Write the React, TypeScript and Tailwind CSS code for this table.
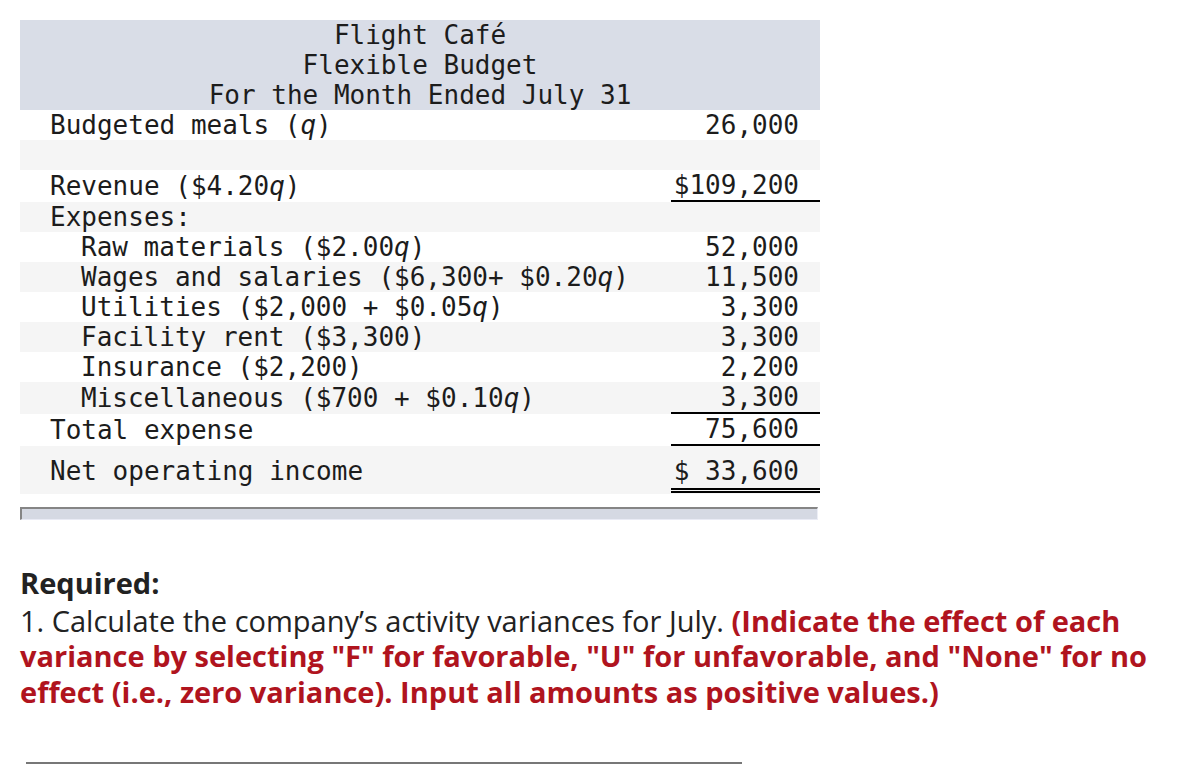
import React from "react";

type Row = {
  label: React.ReactNode;
  value?: string;
  indent?: boolean;
  gray?: boolean;
  line?: "single" | "double";
};

const Q = () => <span className="italic">q</span>;

const rows: Row[] = [
  { label: <>Budgeted meals (<Q />)</>, value: "26,000" },
  { label: "", gray: true },
  { label: <>Revenue ($4.20<Q />)</>, value: "$109,200", line: "single" },
  { label: "Expenses:", gray: true },
  { label: <>Raw materials ($2.00<Q />)</>, value: "52,000", indent: true },
  { label: <>Wages and salaries ($6,300+ $0.20<Q />)</>, value: "11,500", indent: true, gray: true },
  { label: <>Utilities ($2,000 + $0.05<Q />)</>, value: "3,300", indent: true },
  { label: "Facility rent ($3,300)", value: "3,300", indent: true, gray: true },
  { label: "Insurance ($2,200)", value: "2,200", indent: true },
  { label: <>Miscellaneous ($700 + $0.10<Q />)</>, value: "3,300", indent: true, gray: true, line: "single" },
  { label: "Total expense", value: "75,600", line: "single" },
];

export default function App() {
  return (
    <div className="bg-white w-[1202px] h-[764px] overflow-hidden text-[#1c1c1c]">
      <div
        className="ml-[20px] mt-[20px] w-[800px] text-[26px] leading-[30px] whitespace-pre"
        style={{ fontFamily: '"DejaVu Sans Mono", monospace' }}
      >
        <div className="bg-[#d9dde7] text-center">
          <div>Flight Café</div>
          <div>Flexible Budget</div>
          <div>For the Month Ended July 31</div>
        </div>
        {rows.map((r, i) => (
          <div
            key={i}
            className={`flex ${r.line ? "h-[32px]" : "h-[30px]"} ${r.gray ? "bg-[#f5f5f5]" : "bg-white"}`}
          >
            <div className={`flex-1 ${r.line ? "pt-[1px]" : ""} ${r.indent ? "pl-[61px]" : "pl-[30px]"}`}>
              {r.label || "\u00a0"}
            </div>
            <div
              className={`w-[149px] text-right pr-[21px] ${
                r.line === "single" ? "border-b-2 border-black pt-[1px] leading-[29px]" : ""
              }`}
            >
              {r.value || "\u00a0"}
            </div>
          </div>
        ))}
        <div className="flex bg-[#f5f5f5] pb-[1px]">
          <div className="flex-1 pl-[30px] pt-[10px]">Net operating income</div>
          <div className="w-[149px] text-right pr-[21px] pt-[10px] pb-[2px] border-b-[5px] border-double border-black">
            $ 33,600
          </div>
        </div>
      </div>

      <div className="ml-[20px] mt-[13px] w-[798px] h-[13px] bg-[#d5d9e3] border-t-2 border-l-2 border-[#858585] border-b border-b-[#e9ebf5] border-r border-r-[#eceef6]" />

      <div
        className="ml-[20px] mt-[45px] w-[1180px] text-[29px] leading-[35.5px] text-[#222]"
        style={{ fontFamily: "'Open Sans', Lato, sans-serif" }}
      >
        <div className="font-bold">Required:</div>
        <div className="mt-[2px]">
          1. Calculate the company’s activity variances for July.{" "}
          <span className="font-bold text-[#b0141e]">
            (Indicate the effect of each
            <br />
            variance by selecting "F" for favorable, "U" for unfavorable, and "None" for no
            <br />
            effect (i.e., zero variance). Input all amounts as positive values.)
          </span>
        </div>
      </div>

      <div className="ml-[26px] mt-[53px] w-[716px] h-[2px] bg-[#777]" />
    </div>
  );
}
